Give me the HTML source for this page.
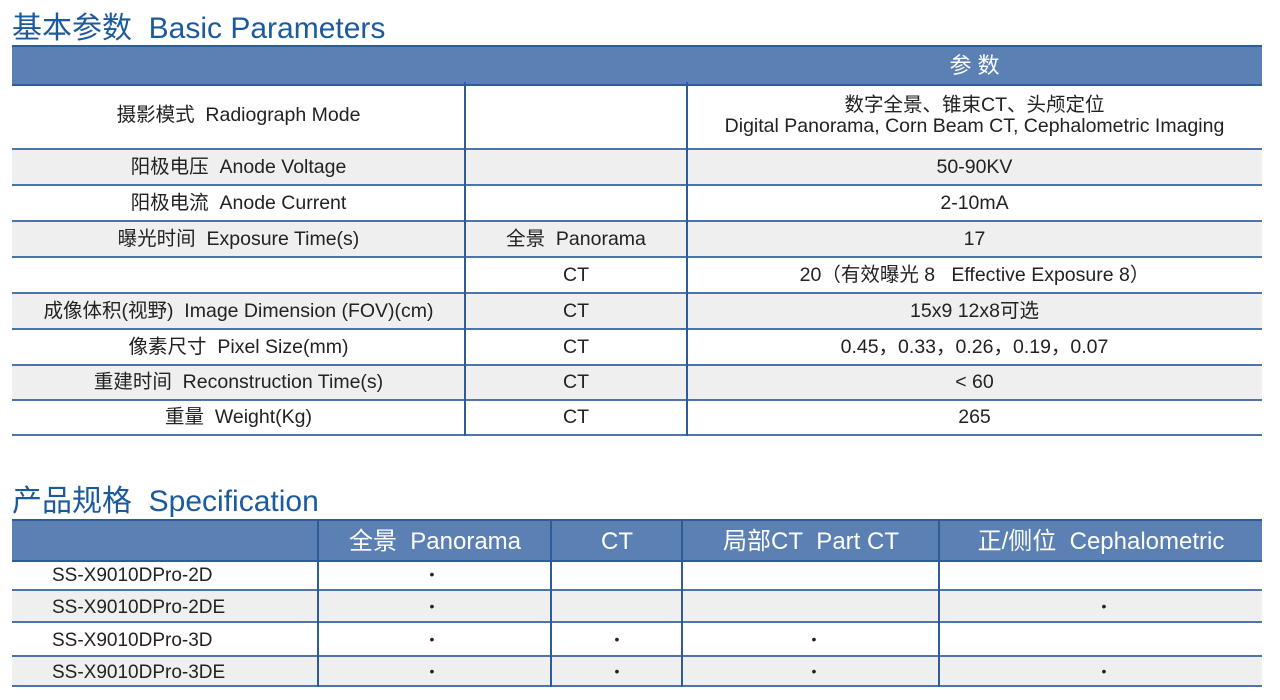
<!DOCTYPE html>
<html><head><meta charset="utf-8"><style>
body{margin:0;width:1280px;height:700px;background:#fff;position:relative;overflow:hidden;font-family:"Liberation Sans","Noto Sans CJK SC",sans-serif;color:#222}
.t{position:absolute;left:12px;color:#1b5a9e;font-size:30px;white-space:nowrap}
.c{position:absolute;display:flex;align-items:center;justify-content:center;text-align:center;font-size:19.5px;line-height:21px;white-space:nowrap;box-sizing:border-box}
.bg{position:absolute;left:12px;width:1250px}
.h{background:#5a80b4;border-top:2px solid #2e5c96;border-bottom:2px solid #2e5c96}
.g{background:#efefef}
.hl{position:absolute;left:12px;width:1250px;height:2px;background:#4f74a8}
.vl{position:absolute;width:2px;background:#2e5c96}
.w{color:#fff;font-size:24px}
.d{font-size:14px}
</style></head><body>
<div class="t" style="top:3px">基本参数&nbsp; Basic Parameters</div>

<div class="bg h" style="top:45px;height:37px"></div>
<div class="bg g" style="top:149px;height:36px"></div>
<div class="bg g" style="top:221px;height:36px"></div>
<div class="bg g" style="top:293px;height:36px"></div>
<div class="bg g" style="top:365px;height:35px"></div>
<div class="hl" style="top:148px"></div>
<div class="hl" style="top:184px"></div>
<div class="hl" style="top:220px"></div>
<div class="hl" style="top:256px"></div>
<div class="hl" style="top:292px"></div>
<div class="hl" style="top:328px"></div>
<div class="hl" style="top:364px"></div>
<div class="hl" style="top:399px"></div>
<div class="hl" style="top:434px"></div>
<div class="vl" style="left:464px;top:82px;height:354px"></div>
<div class="vl" style="left:686px;top:82px;height:354px"></div>

<div class="c w" style="left:687px;width:575px;top:47px;height:36px;font-size:22px">参 数</div>

<div class="c" style="left:12px;width:453px;top:82px;height:67px">摄影模式&nbsp; Radiograph Mode</div>
<div class="c" style="left:687px;width:575px;top:82px;height:67px;flex-direction:column">数字全景、锥束CT、头颅定位<br>Digital Panorama, Corn Beam CT, Cephalometric Imaging</div>

<div class="c" style="left:12px;width:453px;top:149px;height:36px">阳极电压&nbsp; Anode Voltage</div>
<div class="c" style="left:687px;width:575px;top:149px;height:36px">50-90KV</div>
<div class="c" style="left:12px;width:453px;top:185px;height:36px">阳极电流&nbsp; Anode Current</div>
<div class="c" style="left:687px;width:575px;top:185px;height:36px">2-10mA</div>
<div class="c" style="left:12px;width:453px;top:221px;height:36px">曝光时间&nbsp; Exposure Time(s)</div>
<div class="c" style="left:465px;width:222px;top:221px;height:36px">全景&nbsp; Panorama</div>
<div class="c" style="left:687px;width:575px;top:221px;height:36px">17</div>
<div class="c" style="left:465px;width:222px;top:257px;height:36px">CT</div>
<div class="c" style="left:687px;width:575px;top:257px;height:36px">20（有效曝光 8&nbsp;&nbsp; Effective Exposure 8）</div>
<div class="c" style="left:12px;width:453px;top:293px;height:36px">成像体积(视野)&nbsp; Image Dimension (FOV)(cm)</div>
<div class="c" style="left:465px;width:222px;top:293px;height:36px">CT</div>
<div class="c" style="left:687px;width:575px;top:293px;height:36px">15x9 12x8可选</div>
<div class="c" style="left:12px;width:453px;top:329px;height:36px">像素尺寸&nbsp; Pixel Size(mm)</div>
<div class="c" style="left:465px;width:222px;top:329px;height:36px">CT</div>
<div class="c" style="left:687px;width:575px;top:329px;height:36px">0.45，0.33，0.26，0.19，0.07</div>
<div class="c" style="left:12px;width:453px;top:365px;height:35px">重建时间&nbsp; Reconstruction Time(s)</div>
<div class="c" style="left:465px;width:222px;top:365px;height:35px">CT</div>
<div class="c" style="left:687px;width:575px;top:365px;height:35px">&lt; 60</div>
<div class="c" style="left:12px;width:453px;top:400px;height:35px">重量&nbsp; Weight(Kg)</div>
<div class="c" style="left:465px;width:222px;top:400px;height:35px">CT</div>
<div class="c" style="left:687px;width:575px;top:400px;height:35px">265</div>

<div class="t" style="top:476px">产品规格&nbsp; Specification</div>
<div class="bg h" style="top:519px;height:39px"></div>
<div class="bg g" style="top:590px;height:32px"></div>
<div class="bg g" style="top:656px;height:30px"></div>
<div class="hl" style="top:589px"></div>
<div class="hl" style="top:621px"></div>
<div class="hl" style="top:655px"></div>
<div class="hl" style="top:685px"></div>
<div class="vl" style="left:317px;top:520px;height:167px"></div>
<div class="vl" style="left:550px;top:520px;height:167px"></div>
<div class="vl" style="left:681px;top:520px;height:167px"></div>
<div class="vl" style="left:938px;top:520px;height:167px"></div>

<div class="c w" style="left:319px;width:232px;top:523px;height:37px">全景&nbsp; Panorama</div>
<div class="c w" style="left:552px;width:130px;top:523px;height:37px">CT</div>
<div class="c w" style="left:683px;width:256px;top:523px;height:37px">局部CT&nbsp; Part CT</div>
<div class="c w" style="left:940px;width:322px;top:523px;height:37px">正/侧位&nbsp; Cephalometric</div>

<div class="c" style="left:52px;top:559px;height:32px;justify-content:flex-start;font-size:19px">SS-X9010DPro-2D</div>
<div class="c" style="left:52px;top:591px;height:32px;justify-content:flex-start;font-size:19px">SS-X9010DPro-2DE</div>
<div class="c" style="left:52px;top:623px;height:34px;justify-content:flex-start;font-size:19px">SS-X9010DPro-3D</div>
<div class="c" style="left:52px;top:657px;height:30px;justify-content:flex-start;font-size:19px">SS-X9010DPro-3DE</div>

<div class="c d" style="left:319px;width:226px;top:558px;height:32px">•</div>
<div class="c d" style="left:319px;width:226px;top:590px;height:32px">•</div>
<div class="c d" style="left:319px;width:226px;top:622px;height:34px">•</div>
<div class="c d" style="left:319px;width:226px;top:656px;height:30px">•</div>
<div class="c d" style="left:552px;width:130px;top:622px;height:34px">•</div>
<div class="c d" style="left:552px;width:130px;top:656px;height:30px">•</div>
<div class="c d" style="left:683px;width:262px;top:622px;height:34px">•</div>
<div class="c d" style="left:683px;width:262px;top:656px;height:30px">•</div>
<div class="c d" style="left:940px;width:328px;top:590px;height:32px">•</div>
<div class="c d" style="left:940px;width:328px;top:656px;height:30px">•</div>
</body></html>
